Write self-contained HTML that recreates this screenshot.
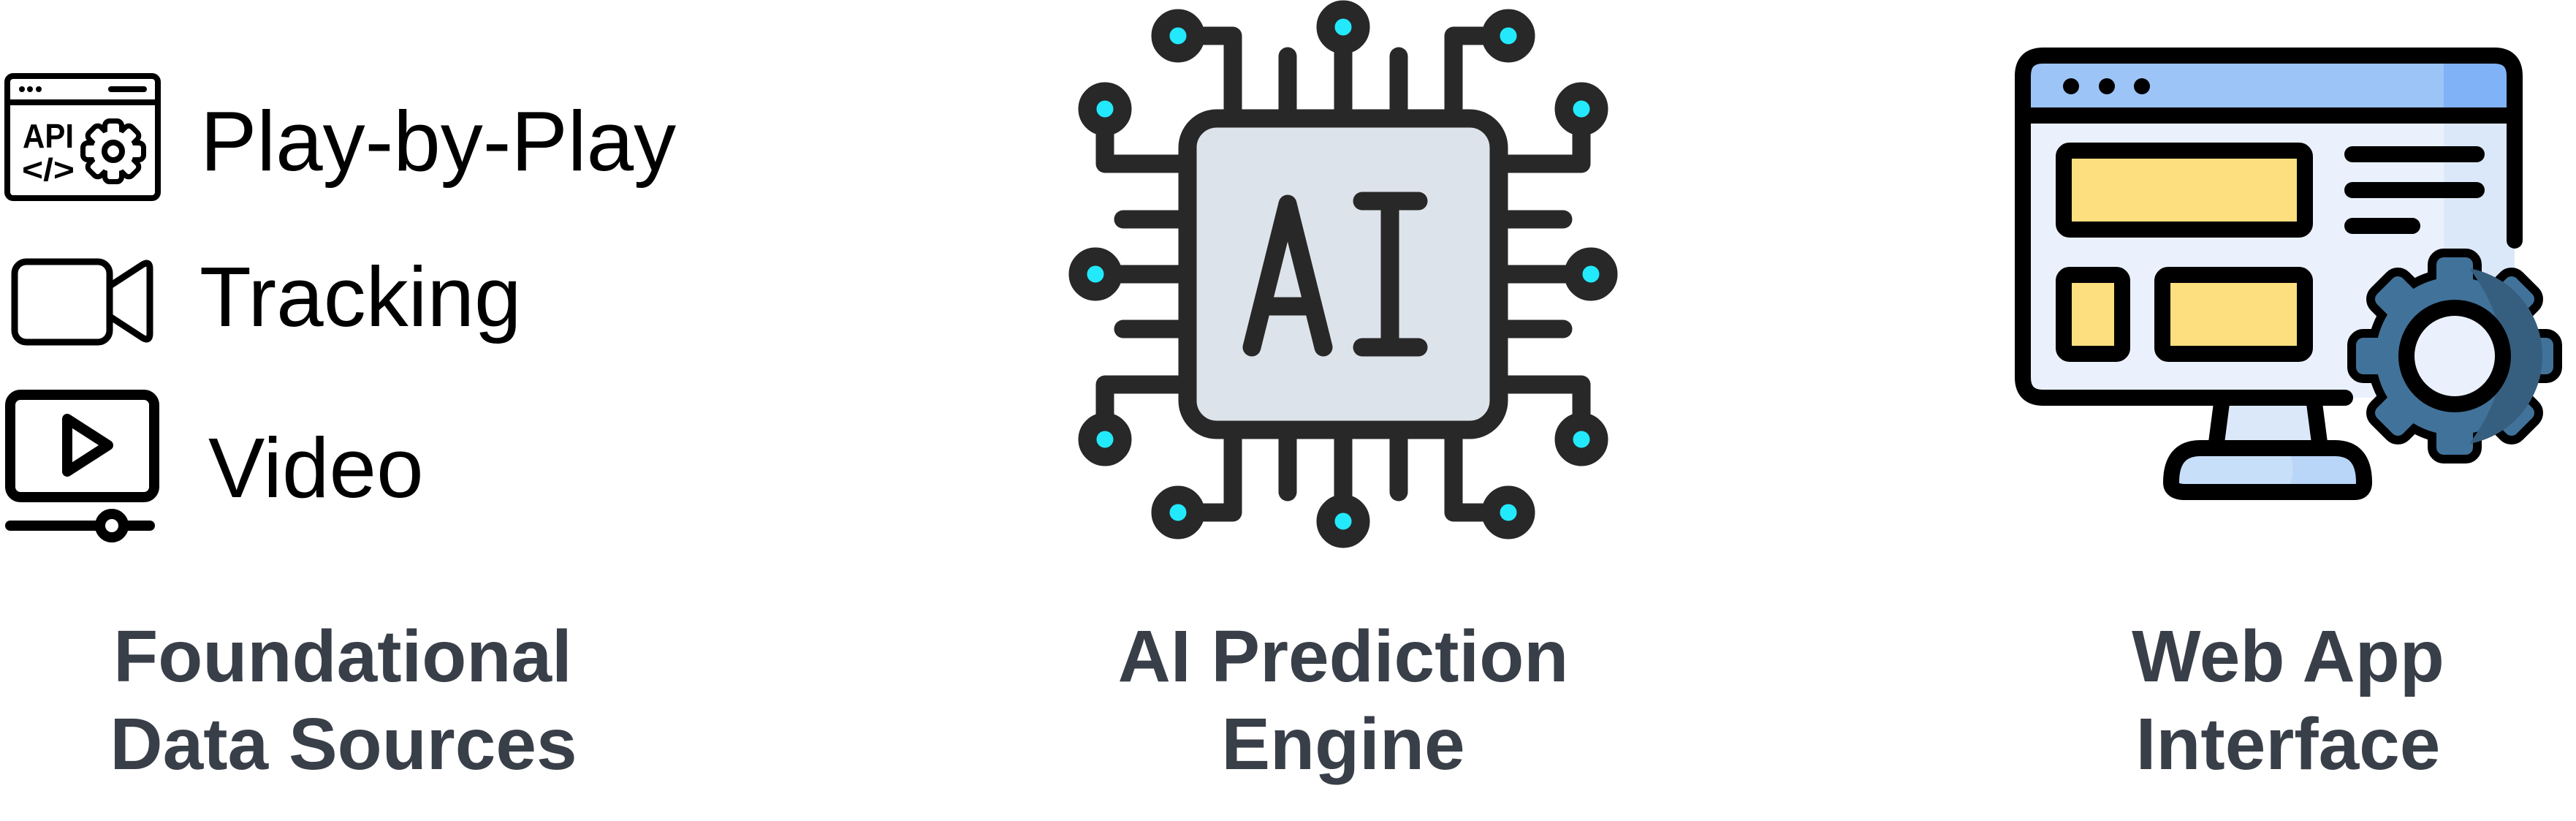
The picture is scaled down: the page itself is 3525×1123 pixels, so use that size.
<!DOCTYPE html>
<html><head><meta charset="utf-8"><style>
html,body{margin:0;padding:0;background:#fff;}
body{width:3525px;height:1123px;position:relative;overflow:hidden;font-family:"Liberation Sans",Arial,sans-serif;}
svg{position:absolute;left:0;top:0;}
</style></head><body>
<svg width="3525" height="1123" viewBox="0 0 3525 1123" xmlns="http://www.w3.org/2000/svg">
<!-- API icon -->
<g fill="none" stroke="#000" stroke-width="8" stroke-linecap="round" stroke-linejoin="round">
<rect x="10" y="104" width="206" height="167" rx="8"/>
<line x1="10" y1="140" x2="216" y2="140"/>
<line x1="152" y1="122" x2="197" y2="122"/>
</g>
<g fill="#000"><circle cx="30" cy="122" r="4"/><circle cx="41" cy="122" r="4"/><circle cx="53" cy="122" r="4"/></g>
<text x="31" y="202" font-family="Liberation Sans" font-size="46" font-weight="bold" textLength="70" lengthAdjust="spacingAndGlyphs" fill="#000">API</text>
<text x="30" y="247" font-family="Liberation Sans" font-size="44" font-weight="bold" textLength="72" lengthAdjust="spacingAndGlyphs" fill="#000">&lt;/&gt;</text>
<g transform="translate(155,207)">
<g fill="none" stroke="#000" stroke-width="14">
<circle r="28"/>
<g id="t1"><rect x="-8" y="-38" width="16" height="14" rx="3"/></g>
<use href="#t1" transform="rotate(45)"/><use href="#t1" transform="rotate(90)"/><use href="#t1" transform="rotate(135)"/><use href="#t1" transform="rotate(180)"/><use href="#t1" transform="rotate(225)"/><use href="#t1" transform="rotate(270)"/><use href="#t1" transform="rotate(315)"/>
</g>
<g fill="#fff">
<circle r="28"/>
<g id="t2"><rect x="-8" y="-38" width="16" height="14" rx="3"/></g>
<use href="#t2" transform="rotate(45)"/><use href="#t2" transform="rotate(90)"/><use href="#t2" transform="rotate(135)"/><use href="#t2" transform="rotate(180)"/><use href="#t2" transform="rotate(225)"/><use href="#t2" transform="rotate(270)"/><use href="#t2" transform="rotate(315)"/>
</g>
<circle r="12" fill="none" stroke="#000" stroke-width="8"/>
</g>
<!-- Camera -->
<g fill="none" stroke="#000" stroke-width="9" stroke-linejoin="round">
<rect x="20" y="358" width="130" height="110" rx="16"/>
<path d="M152 390 L195 362 Q205 356 205 368 V456 Q205 468 195 462 L152 434"/>
</g>
<!-- Video -->
<g fill="none" stroke="#000" stroke-width="14" stroke-linecap="round" stroke-linejoin="round">
<rect x="14" y="540" width="197" height="140" rx="14"/>
<path d="M92 573 L92 645 L148 609 Z"/>
<line x1="14" y1="719" x2="205" y2="719"/>
<circle cx="153" cy="719" r="16" fill="#fff"/>
</g>

<!-- Chip -->
<g transform="translate(1838,375)" stroke="#282828" stroke-width="25" stroke-linecap="round" stroke-linejoin="round" fill="none">
<path d="M-151 -213 V-326 H-226 M151 -213 V-326 H226 M-76 -213 V-298 M76 -213 V-298 M0 -213 V-338"/>
<path d="M-151 213 V326 H-226 M151 213 V326 H226 M-76 213 V298 M76 213 V298 M0 213 V338"/>
<path d="M-213 -151 H-326 V-226 M-213 151 H-326 V226 M-213 -75 H-301 M-213 75 H-301 M-213 0 H-339"/>
<path d="M213 -151 H326 V-226 M213 151 H326 V226 M213 -75 H301 M213 75 H301 M213 0 H339"/>
<rect x="-213" y="-213" width="426" height="426" rx="40" fill="#dce3ea"/>
<path d="M-125 100 L-76 -96 L-27 100 M-107 44 H-45"/>
<path d="M26 -100 H103 M64 -100 V100 M26 100 H103"/>
<g fill="#22e9fb">
<circle cx="-226" cy="-326" r="24"/><circle cx="226" cy="-326" r="24"/><circle cx="0" cy="-338" r="24"/>
<circle cx="-226" cy="326" r="24"/><circle cx="226" cy="326" r="24"/><circle cx="0" cy="338" r="24"/>
<circle cx="-326" cy="-226" r="24"/><circle cx="-326" cy="226" r="24"/><circle cx="-339" cy="0" r="24"/>
<circle cx="326" cy="-226" r="24"/><circle cx="326" cy="226" r="24"/><circle cx="339" cy="0" r="24"/>
</g>
</g>

<!-- Web app icon -->
<rect x="2768" y="76" width="673" height="468" rx="28" fill="#eaf1fd"/>
<rect x="3344" y="158" width="97" height="386" fill="#dbe8f9"/>
<path d="M2768 158 V104 Q2768 76 2796 76 H3413 Q3441 76 3441 104 V158 Z" fill="#9cc4f7"/>
<path d="M3344 76 H3413 Q3441 76 3441 104 V158 H3344 Z" fill="#80b2f7"/>
<path d="M3041 544 H3166 L3175 614 H3032 Z" fill="#dbe8f9"/>
<path d="M2990 673 H3222 Q3235 673 3235 660 Q3235 613 3195 613 H3011 Q2971 613 2971 660 Q2971 673 2990 673 Z" fill="#c8dffa"/>
<path d="M3130 673 H3222 Q3235 673 3235 660 Q3235 613 3195 613 H3130 Q3145 640 3130 673 Z" fill="#b9d5f8"/>
<g fill="none" stroke="#000" stroke-width="22" stroke-linecap="round" stroke-linejoin="round">
<path d="M3209 544 H2796 Q2768 544 2768 516 V104 Q2768 76 2796 76 H3413 Q3441 76 3441 104 V329"/>
<line x1="2768" y1="158" x2="3441" y2="158"/>
<rect x="2824" y="206" width="330" height="108" rx="8" fill="#fddf7f"/>
<rect x="2824" y="376" width="80" height="108" rx="8" fill="#fddf7f"/>
<rect x="2959" y="376" width="195" height="108" rx="8" fill="#fddf7f"/>
<path d="M3219 211 H3389 M3219 260 H3389 M3219 309 H3301"/>
<path d="M3041 544 L3032 613 M3166 544 L3175 613"/>
<path d="M2990 673 H3222 Q3235 673 3235 660 Q3235 613 3195 613 H3011 Q2971 613 2971 660 Q2971 673 2990 673 Z"/>
</g>
<g fill="#000"><circle cx="2834" cy="118" r="11"/><circle cx="2883" cy="118" r="11"/><circle cx="2931" cy="118" r="11"/></g>
<g transform="translate(3359,487)">
<g fill="none" stroke="#000" stroke-width="24" stroke-linejoin="round">
<circle r="108"/>
<g id="g1"><rect x="-25" y="-135" width="50" height="60" rx="10"/></g>
<use href="#g1" transform="rotate(45)"/><use href="#g1" transform="rotate(90)"/><use href="#g1" transform="rotate(135)"/><use href="#g1" transform="rotate(180)"/><use href="#g1" transform="rotate(225)"/><use href="#g1" transform="rotate(270)"/><use href="#g1" transform="rotate(315)"/>
</g>
<g fill="#41729a">
<circle r="108"/>
<g id="g2"><rect x="-25" y="-135" width="50" height="60" rx="10"/></g>
<use href="#g2" transform="rotate(45)"/><use href="#g2" transform="rotate(90)"/><use href="#g2" transform="rotate(135)"/><use href="#g2" transform="rotate(180)"/><use href="#g2" transform="rotate(225)"/><use href="#g2" transform="rotate(270)"/><use href="#g2" transform="rotate(315)"/>
</g>
<path d="M20 -120 A122 122 0 0 1 20 120 Q110 0 20 -120 Z" fill="#365e7f"/>
<circle r="66" fill="#eaf1fd" stroke="#000" stroke-width="22"/>
</g>

<!-- Labels -->
<g font-family="Liberation Sans" font-size="116" fill="#000">
<text x="274" y="233">Play-by-Play</text>
<text x="273" y="446">Tracking</text>
<text x="285" y="680">Video</text>
</g>
<g font-family="Liberation Sans" font-size="100" font-weight="bold" fill="#393f48" text-anchor="middle">
<text x="469" y="932">Foundational</text>
<text x="470" y="1052">Data Sources</text>
<text x="1838" y="932">AI Prediction</text>
<text x="1838" y="1052">Engine</text>
<text x="3131" y="932">Web App</text>
<text x="3131" y="1052">Interface</text>
</g>
</svg>
</body></html>
